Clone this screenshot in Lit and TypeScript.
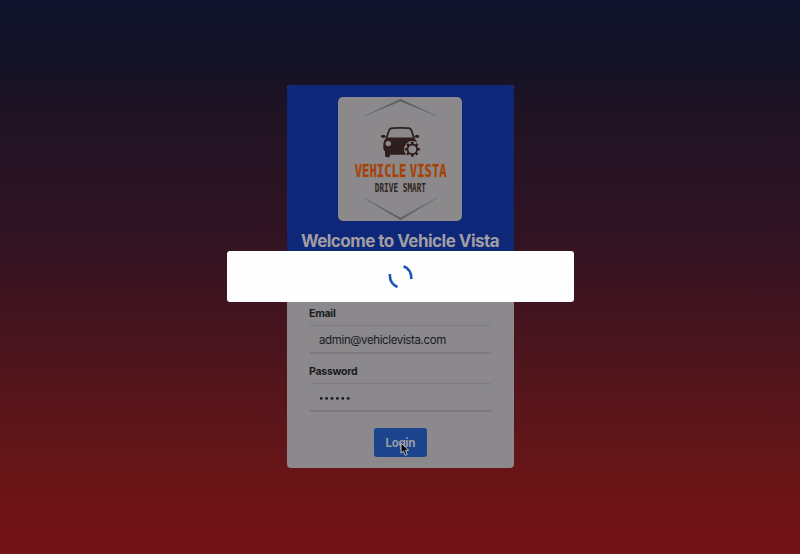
import { LitElement, html, svg, css } from "lit";
import { customElement } from "lit/decorators.js";

const GEAR_TEETH = [0, 45, 90, 135, 180, 225, 270, 315];
const PASSWORD_LENGTH = 6;

@customElement("vista-logo")
class VistaLogo extends LitElement {
  static styles = css`
    :host { display: block; width: 124px; height: 124px; border-radius: 5px; background: #8b898b; overflow: hidden; }
    svg { display: block; }
    .edge { fill: #5e6064; stroke: #5e6064; stroke-width: 0.2; }
    .ink { fill: #301d1e; }
    .outline { fill: none; stroke: #301d1e; stroke-width: 1.8; stroke-linejoin: round; }
    .pale { fill: #8b898b; }
    .ring { fill: #8b898b; stroke: #301d1e; stroke-width: 1.8; }
    .name { font: 700 17.5px "DejaVu Sans Mono", monospace; fill: #a23a10; stroke: #a8600f; stroke-width: 0.5; }
    .motto { font: 700 12.2px "DejaVu Sans Mono", monospace; fill: #302525; }
  `;
  render() {
    return html`<svg width="124" height="124" viewBox="338 97 124 124">
      <path class="edge" d="M363.5 116.5 400.5 99l36.5 17.2-36.5-15Z M363 197.5l37.5 20.3 37-20.3-37 22.5Z" />
      <path class="outline" d="M386.2 138.5l2.6-7.5q.8-2.6 3.5-2.8 8-.6 16 0 2.6.2 3.4 2.8l2.4 7.5" />
      <path class="ink" d="M386.5 137.6h27.5l3 4.4v8l-4 4.7h-23v1.3q0 1.3-1.3 1.3h-2q-1.6 0-1.7-1.8v-4.1q-1.6-1.4-1.8-4-.3-6.6 3.3-9.8Z" />
      <ellipse class="ink" cx="383.3" cy="136.3" rx="2.2" ry="1.6" />
      <ellipse class="ink" cx="417" cy="136.3" rx="2.2" ry="1.6" />
      <circle class="pale" cx="388.3" cy="143.6" r="2.7" />
      <circle class="pale" cx="412.3" cy="149.3" r="8.3" />
      ${GEAR_TEETH.map(
        (a) => svg`<rect class="ink" x="411" y="141.8" width="2.6" height="3.4" rx=".4" transform="rotate(${a} 412.3 149.3)"/>`
      )}
      <circle class="ring" cx="412.3" cy="149.3" r="4.8" />
      <text class="name" transform="translate(354.7 176.7) scale(.7 1)">VEHICLE</text>
      <text class="name" transform="translate(409.8 176.7) scale(.7 1)">VISTA</text>
      <text class="motto" transform="translate(374.8 191.6) scale(.635 1)">DRIVE SMART</text>
    </svg>`;
  }
}

@customElement("app-root")
class AppRoot extends LitElement {
  static styles = css`
    * { box-sizing: border-box; }
    :host {
      display: flex; justify-content: center; position: relative;
      width: 100%; height: 554px; padding-top: 85px; overflow: hidden; box-sizing: border-box;
      font-family: Inter, "Liberation Sans", sans-serif;
      background: linear-gradient(180deg, #0e132c 0%, #151225 13%, #211323 22%, #301323 42%, #42141f 56%, #54151b 70%, #651518 83%, #721316 95%, #741216 100%);
    }
    .card {
      display: flex; flex-direction: column; width: 227px; height: 383px;
      border-radius: 4px; overflow: hidden; background: #8b898b; color: #17191f;
    }
    .header { display: flex; flex-direction: column; align-items: center; height: 182px; padding-top: 12px; background: #0f2779; flex: none; }
    .title { margin: 9px 0 0; font-size: 17px; line-height: 22px; font-weight: 700; letter-spacing: -0.53px; color: #a09ea3; white-space: nowrap; }
    .form { display: flex; flex-direction: column; padding: 40px 22px 0 22.5px; }
    .label { font-size: 10.5px; line-height: 14px; font-weight: 700; letter-spacing: -0.25px; }
    .field {
      height: 29px; margin: 4px 0 11px; padding: 1px 9px 0; display: flex; align-items: center;
      font-size: 11.5px; letter-spacing: -0.37px;
      border: 1px solid #888688; border-top-color: #7e7c80; border-bottom: 2px solid #7b797d; border-radius: 3px;
    }
    .dots { display: block; fill: #17191f; }
    .login {
      align-self: center; width: 53px; height: 29px; margin-top: 5px; padding: 0; border: 0; border-radius: 3px;
      background: #1c438e; color: #9b9ba5; font: 700 11.5px Inter, sans-serif; letter-spacing: -0.3px;
    }
    .modal {
      position: absolute; left: 227px; top: 251px; width: 347px; height: 51px;
      border-radius: 3px; background: #fefefe; display: flex; align-items: center; justify-content: center;
    }
    .arc { fill: none; stroke: #1c57b8; stroke-width: 2.6; }
    .cursor { position: absolute; left: 400px; top: 442px; }
    .arrow { fill: #09090d; stroke: #c2c0c5; stroke-width: 1; stroke-linejoin: round; }
  `;
  render() {
    return html`
      <div class="card">
        <div class="header">
          <vista-logo></vista-logo>
          <h1 class="title">Welcome to Vehicle Vista</h1>
        </div>
        <div class="form">
          <div class="label">Email</div>
          <div class="field">admin@vehiclevista.com</div>
          <div class="label">Password</div>
          <div class="field">
            <svg class="dots" width="34" height="6" viewBox="0 0 34 6">
              ${Array.from({ length: PASSWORD_LENGTH }, (_, i) => svg`<circle cx=${2.2 + i * 5.4} cy="3.4" r="1.4"/>`)}
            </svg>
          </div>
          <button class="login">Login</button>
        </div>
      </div>
      <div class="modal">
        <svg width="26" height="26" viewBox="388 264 26 26">
          <path class="arc" d="M403.6 266.3q8 3.2 7.7 12.7M389.9 274q-.6 9.4 7.6 13" />
        </svg>
      </div>
      <svg class="cursor" width="10" height="15" viewBox="0 0 10 15">
        <path class="arrow" d="M1 1v10.3l2.4-2.2 1.8 4.2 2-.9-1.8-4 3.3-.2Z" />
      </svg>
    `;
  }
}
